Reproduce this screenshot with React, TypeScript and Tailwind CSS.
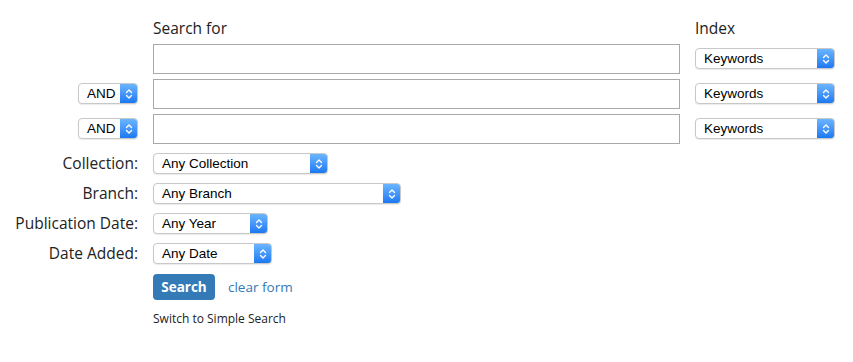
const SelectBox = ({ label, width }: { label: string; width: string }) => {
  return (
    <div
      className={`${width} h-[21px] flex items-stretch rounded-[4px] border border-[#c8c8c8] bg-white shadow-[0_1px_1px_rgba(0,0,0,0.08)] overflow-hidden`}
    >
      <span className="flex-1 flex items-center pl-[8px] text-[13.5px] text-black font-['Liberation_Sans',Arial,sans-serif] leading-none">
        {label}
      </span>
      <span className="w-[17px] flex items-center justify-center bg-gradient-to-b from-[#6bb5ff] to-[#1a78f2]">
        <svg width="8" height="12" viewBox="0 0 8 12" fill="none">
          <path d="M1.5 4.5 L4 2 L6.5 4.5" stroke="white" strokeWidth="1.4" strokeLinecap="round" strokeLinejoin="round" />
          <path d="M1.5 7.5 L4 10 L6.5 7.5" stroke="white" strokeWidth="1.4" strokeLinecap="round" strokeLinejoin="round" />
        </svg>
      </span>
    </div>
  );
};

const App: React.FC = () => {
  const label = "text-right text-[15.5px] text-[#222] leading-none self-center";
  return (
    <div className="w-[853px] h-[362px] bg-white font-['Open_Sans',sans-serif] text-[#222]">
      <div className="grid grid-cols-[138px_527px_140px] gap-x-[15px] pt-[19px]">
        <div />
        <div className="text-[15.5px] leading-[18px] h-[25px]">Search for</div>
        <div className="text-[15.5px] leading-[18px] h-[25px]">Index</div>

        <div />
        <input className="h-[30px] border border-[#a9a9a9] bg-white" />
        <div className="self-center -mt-[1px]">
          <SelectBox label="Keywords" width="w-[140px]" />
        </div>

        <div className="self-center flex justify-end mt-[4px]">
          <SelectBox label="AND" width="w-[60px]" />
        </div>
        <input className="h-[30px] border border-[#a9a9a9] bg-white mt-[5px]" />
        <div className="self-center mt-[4px]">
          <SelectBox label="Keywords" width="w-[140px]" />
        </div>

        <div className="self-center flex justify-end mt-[4px]">
          <SelectBox label="AND" width="w-[60px]" />
        </div>
        <input className="h-[30px] border border-[#a9a9a9] bg-white mt-[5px]" />
        <div className="self-center mt-[4px]">
          <SelectBox label="Keywords" width="w-[140px]" />
        </div>

        <div className={`${label} mt-[9px]`}>Collection:</div>
        <div className="mt-[9px]">
          <SelectBox label="Any Collection" width="w-[175px]" />
        </div>
        <div />

        <div className={`${label} mt-[9px]`}>Branch:</div>
        <div className="mt-[9px]">
          <SelectBox label="Any Branch" width="w-[248px]" />
        </div>
        <div />

        <div className={`${label} mt-[9px]`}>Publication Date:</div>
        <div className="mt-[9px]">
          <SelectBox label="Any Year" width="w-[115px]" />
        </div>
        <div />

        <div className={`${label} mt-[9px]`}>Date Added:</div>
        <div className="mt-[9px]">
          <SelectBox label="Any Date" width="w-[119px]" />
        </div>
        <div />

        <div />
        <div className="flex items-center gap-[13px] mt-[10px]">
          <button className="w-[62px] h-[26px] rounded-[4px] bg-[#337ab7] text-white text-[13.5px] font-bold">
            Search
          </button>
          <a className="text-[13.5px] text-[#337ab7]">clear form</a>
        </div>
        <div />

        <div />
        <div className="text-[12px] leading-none mt-[13px]">Switch to Simple Search</div>
        <div />
      </div>
    </div>
  );
};

export default App;
